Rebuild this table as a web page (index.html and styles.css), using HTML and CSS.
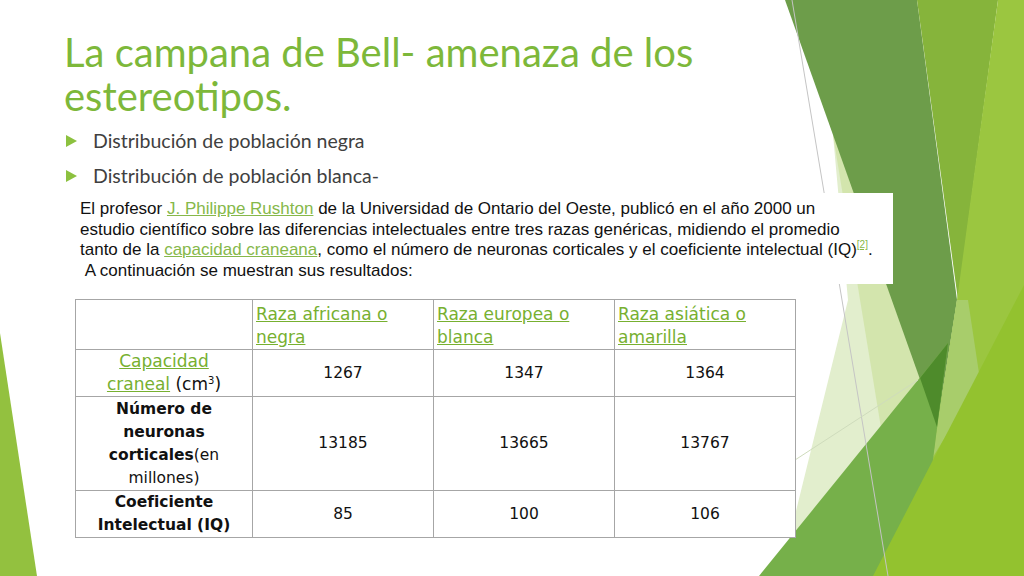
FILE: index.html
```html
<!DOCTYPE html>
<html lang="es">
<head>
<meta charset="utf-8">
<title>La campana de Bell</title>
<link rel="stylesheet" href="styles.css">
</head>
<body>
<div class="slide">
  <svg class="deco" viewBox="0 0 1024 576" width="1024" height="576" aria-hidden="true">
    <polygon points="0,333 37,576 0,576" fill="#93c13f"/>
    <polygon points="833,135 848,300 780,576 900,576 937,427" fill="#e2eecd"/>
    <polygon points="833,135 883,440 950,440 900,135" fill="#d3e5ad"/>
    <polygon points="785,0 917,0 957,300 937,427" fill="#6d9d4a"/>
    <polygon points="917,0 998,0 958,300" fill="#86b43b"/>
    <polygon points="998,0 1024,0 1024,576 900,576 937,427 957,300" fill="#9bc640"/>
    <polygon points="957,300 968,300 980,380 933,457 937,427" fill="#a8cd6b"/>
    <polygon points="759,576 948,343 918,576" fill="#76b04a"/>
    <polygon points="920,378 948,343 937,427" fill="#4e8b2b"/>
    <polygon points="873,576 933,460 1024,285 1024,576" fill="#93c22f"/>
    <line x1="792" y1="0" x2="888" y2="576" stroke="#c4c4c4" stroke-width="1"/>
    <line x1="795" y1="460" x2="918" y2="380" stroke="#cfdcbc" stroke-width="1"/>
  </svg>

  <div class="content">
    <h1 class="title">La campana de Bell- amenaza de los<br>estereotipos.</h1>
    <ul class="bullets">
      <li>Distribución de población negra</li>
      <li>Distribución de población blanca-</li>
    </ul>

    <div class="note">
      <p>El profesor <a class="link">J. Philippe Rushton</a> de la Universidad de Ontario del Oeste, publicó en el año 2000 un<br>estudio científico sobre las diferencias intelectuales entre tres razas genéricas, midiendo el promedio<br>tanto de la <a class="link">capacidad craneana</a>, como el número de neuronas corticales y el coeficiente intelectual (IQ)<sup class="ref">[2]</sup>.<br>&nbsp;A continuación se muestran sus resultados:</p>
    </div>

    <table class="data">
      <colgroup>
        <col class="c1"><col class="c2"><col class="c3"><col class="c4">
      </colgroup>
      <tr class="r-head">
        <td></td>
        <td class="head"><a class="tlink">Raza africana o<br>negra</a></td>
        <td class="head"><a class="tlink">Raza europea o<br>blanca</a></td>
        <td class="head"><a class="tlink">Raza asiática o<br>amarilla</a></td>
      </tr>
      <tr class="r-cap">
        <td class="label cap"><a class="tlink">Capacidad<br>craneal</a> (cm<sup class="cube">3</sup>)</td>
        <td>1267</td><td>1347</td><td>1364</td>
      </tr>
      <tr class="r-neu">
        <td class="label"><b>Número de<br>neuronas<br>corticales</b>(en<br>millones)</td>
        <td>13185</td><td>13665</td><td>13767</td>
      </tr>
      <tr class="r-iq">
        <td class="label"><b>Coeficiente<br>Intelectual (IQ)</b></td>
        <td>85</td><td>100</td><td>106</td>
      </tr>
    </table>
  </div>
</div>
</body>
</html>
```

FILE: styles.css
```css
html, body {
  margin: 0;
  padding: 0;
  background: #ffffff;
}

.slide {
  position: relative;
  width: 1024px;
  height: 576px;
  overflow: hidden;
  background: #ffffff;
}

.deco {
  position: absolute;
  left: 0;
  top: 0;
  z-index: 0;
}

.content {
  position: relative;
  z-index: 1;
  padding-top: 30px;
}

.title {
  margin: 0;
  padding-left: 64px;
  font-family: "Lato", "DejaVu Sans", sans-serif;
  font-weight: normal;
  font-size: 40px;
  line-height: 44px;
  color: #7db83a;
}

.bullets {
  list-style: none;
  margin: 11px 0 0 0;
  padding: 0 0 0 66px;
  font-family: "Lato", "DejaVu Sans", sans-serif;
  font-size: 19.5px;
  line-height: 24px;
  color: #404040;
}

.bullets li {
  display: flex;
  align-items: center;
  gap: 16px;
  margin-bottom: 11px;
}

.bullets li:last-child {
  margin-bottom: 0;
}

.bullets li::before {
  content: "";
  flex: none;
  width: 11px;
  height: 12px;
  background: #8cc13f;
  clip-path: polygon(0 0, 100% 50%, 0 100%);
}

.note {
  margin: 5px 0 0 75px;
  width: 813px;
  height: 85px;
  padding: 6px 0 0 5px;
  background: #ffffff;
  font-family: "Liberation Sans", Arial, sans-serif;
  font-size: 17px;
  line-height: 20.5px;
  color: #111111;
  white-space: nowrap;
}

.note p {
  margin: 0;
}

.link {
  color: #86b84a;
  text-decoration: underline;
}

.ref {
  font-size: 10px;
  line-height: 0;
  vertical-align: 7px;
  color: #86b84a;
  text-decoration: underline;
}

.data {
  margin: 15px 0 0 75px;
  border-collapse: collapse;
  table-layout: fixed;
  width: 721px;
  background: #ffffff;
  font-family: "DejaVu Sans", sans-serif;
  font-size: 15.5px;
  line-height: 23px;
  color: #111111;
}

.c1 { width: 177px; }
.c2 { width: 181px; }
.c3 { width: 181px; }
.c4 { width: 181px; }

.data td {
  border: 1px solid #a6a6a6;
  padding: 0 3px;
  text-align: center;
  vertical-align: middle;
}

.data td.head {
  text-align: left;
  vertical-align: bottom;
  font-size: 17px;
}

.data td.cap {
  font-size: 17px;
}

.r-head { height: 50px; }
.r-cap { height: 47px; }
.r-neu { height: 94px; }
.r-iq { height: 46px; }

.tlink {
  color: #77b030;
  text-decoration: underline;
}

.cube {
  font-size: 10px;
  line-height: 0;
  vertical-align: 6px;
}
```
